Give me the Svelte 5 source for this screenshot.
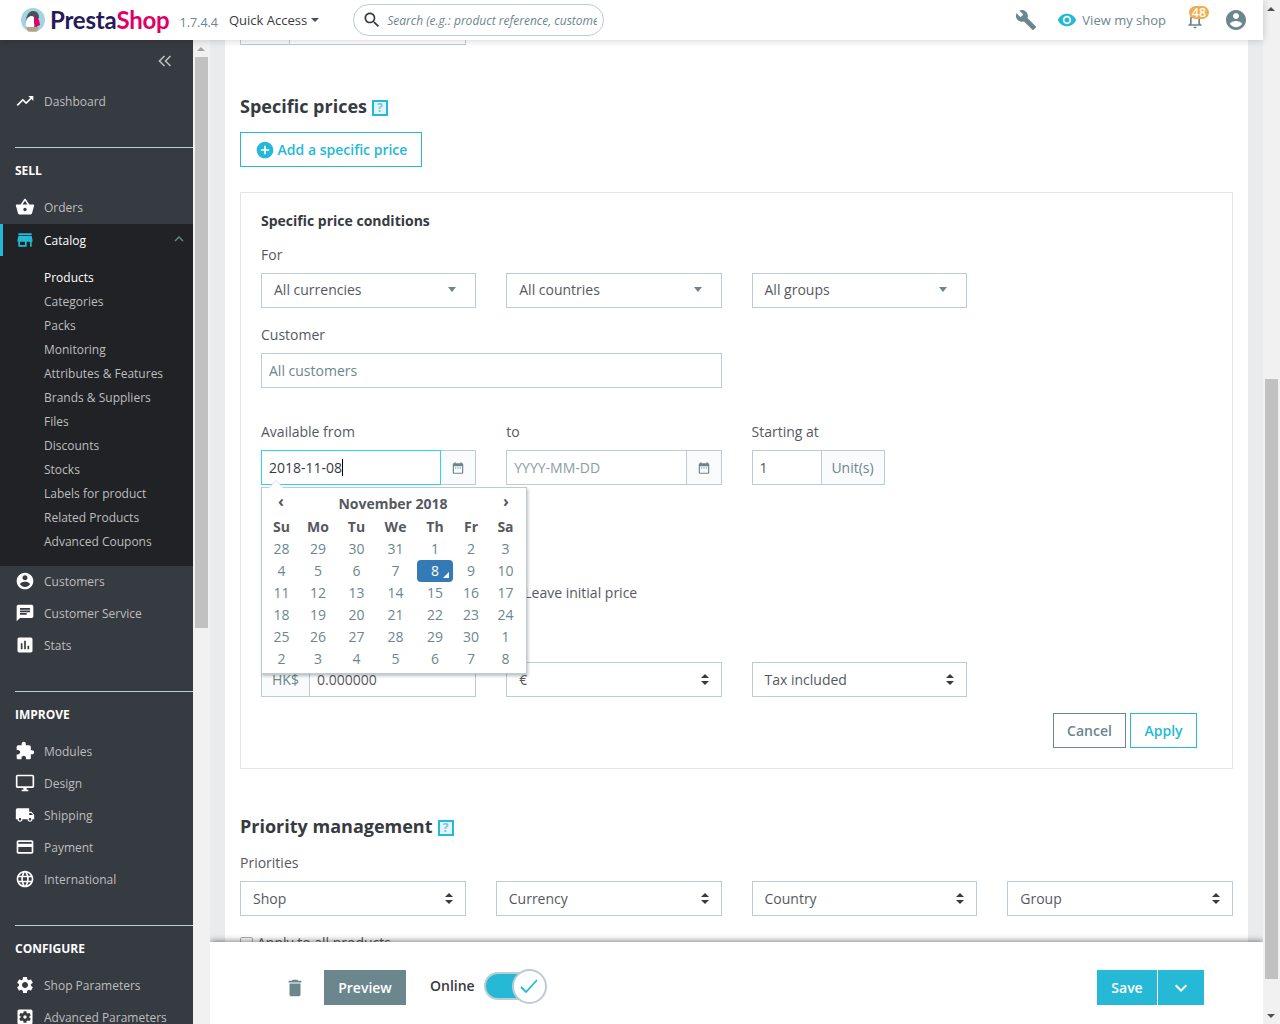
<script>
	const icons = {
		trend: 'M16 6l2.29 2.29-4.88 4.88-4-4L2 16.59 3.41 18l6-6 4 4 6.3-6.29L22 12V6z',
		basket: 'M17.21 9l-4.38-6.56c-.19-.28-.51-.42-.83-.42-.32 0-.64.14-.83.43L6.79 9H2c-.55 0-1 .45-1 1 0 .09.01.18.04.27l2.54 9.27c.23.84 1 1.46 1.92 1.46h13c.92 0 1.69-.62 1.93-1.46l2.54-9.27L23 10c0-.55-.45-1-1-1h-4.79zM9 9l3-4.4L15 9H9zm3 8c-1.1 0-2-.9-2-2s.9-2 2-2 2 .9 2 2-.9 2-2 2z',
		store: 'M20 4H4v2h16V4zm1 10v-2l-1-5H4l-1 5v2h1v6h10v-6h4v6h2v-6h1zm-9 4H6v-4h6v4z',
		account: 'M12 2C6.48 2 2 6.48 2 12s4.48 10 10 10 10-4.48 10-10S17.52 2 12 2zm0 3c1.66 0 3 1.34 3 3s-1.34 3-3 3-3-1.34-3-3 1.34-3 3-3zm0 14.2c-2.5 0-4.71-1.28-6-3.22.03-1.99 4-3.08 6-3.08 1.99 0 5.97 1.09 6 3.08-1.29 1.94-3.5 3.22-6 3.22z',
		chat: 'M20 2H4c-1.1 0-1.99.9-1.99 2L2 22l4-4h14c1.1 0 2-.9 2-2V4c0-1.1-.9-2-2-2zm-6 12H6v-2h8v2zm4-3H6V9h12v2zm0-3H6V6h12v2z',
		stats: 'M19 3H5c-1.1 0-2 .9-2 2v14c0 1.1.9 2 2 2h14c1.1 0 2-.9 2-2V5c0-1.1-.9-2-2-2zM9 17H7v-7h2v7zm4 0h-2V7h2v10zm4 0h-2v-4h2v4z',
		puzzle: 'M20.5 11H19V7c0-1.1-.9-2-2-2h-4V3.5C13 2.12 11.88 1 10.5 1S8 2.12 8 3.5V5H4c-1.1 0-1.99.9-1.99 2v3.8H3.5c1.49 0 2.7 1.21 2.7 2.7s-1.21 2.7-2.7 2.7H2V20c0 1.1.9 2 2 2h3.8v-1.5c0-1.49 1.21-2.7 2.7-2.7 1.49 0 2.7 1.21 2.7 2.7V22H17c1.1 0 2-.9 2-2v-4h1.5c1.38 0 2.5-1.12 2.5-2.5S21.88 11 20.5 11z',
		desktop: 'M21 2H3c-1.1 0-2 .9-2 2v12c0 1.1.9 2 2 2h7v2H8v2h8v-2h-2v-2h7c1.1 0 2-.9 2-2V4c0-1.1-.9-2-2-2zm0 14H3V4h18v12z',
		truck: 'M20 8h-3V4H3c-1.1 0-2 .9-2 2v11h2c0 1.66 1.34 3 3 3s3-1.34 3-3h6c0 1.66 1.34 3 3 3s3-1.34 3-3h2v-5l-3-4zM6 18.5c-.83 0-1.5-.67-1.5-1.5s.67-1.5 1.5-1.5 1.5.67 1.5 1.5-.67 1.5-1.5 1.5zm13.5-9l1.96 2.5H17V9.5h2.5zm-1.5 9c-.83 0-1.5-.67-1.5-1.5s.67-1.5 1.5-1.5 1.5.67 1.5 1.5-.67 1.5-1.5 1.5z',
		card: 'M20 4H4c-1.11 0-1.99.89-1.99 2L2 18c0 1.11.89 2 2 2h16c1.11 0 2-.89 2-2V6c0-1.11-.89-2-2-2zm0 14H4v-6h16v6zm0-10H4V6h16v2z',
		globe: 'M11.99 2C6.47 2 2 6.48 2 12s4.47 10 9.99 10C17.52 22 22 17.52 22 12S17.52 2 11.99 2zm6.93 6h-2.95c-.32-1.25-.78-2.45-1.38-3.56 1.84.63 3.37 1.91 4.33 3.56zM12 4.04c.83 1.2 1.48 2.53 1.91 3.96h-3.82c.43-1.43 1.08-2.76 1.91-3.96zM4.26 14C4.1 13.36 4 12.69 4 12s.1-1.36.26-2h3.38c-.08.66-.14 1.32-.14 2 0 .68.06 1.34.14 2H4.26zm.82 2h2.95c.32 1.25.78 2.45 1.38 3.56-1.84-.63-3.37-1.9-4.33-3.56zm2.95-8H5.08c.96-1.66 2.49-2.93 4.33-3.56C8.81 5.55 8.35 6.75 8.03 8zM12 19.96c-.83-1.2-1.48-2.53-1.91-3.96h3.82c-.43 1.43-1.08 2.76-1.91 3.96zM14.34 14H9.66c-.09-.66-.16-1.32-.16-2 0-.68.07-1.35.16-2h4.68c.09.65.16 1.32.16 2 0 .68-.07 1.34-.16 2zm.25 5.56c.6-1.11 1.06-2.31 1.38-3.56h2.95c-.96 1.65-2.49 2.93-4.33 3.56zM16.36 14c.08-.66.14-1.32.14-2 0-.68-.06-1.34-.14-2h3.38c.16.64.26 1.31.26 2s-.1 1.36-.26 2h-3.38z',
		gear: 'M19.14 12.94c.04-.3.06-.61.06-.94 0-.32-.02-.64-.07-.94l2.03-1.58c.18-.14.23-.41.12-.61l-1.92-3.32c-.12-.22-.37-.29-.59-.22l-2.39.96c-.5-.38-1.03-.7-1.62-.94l-.36-2.54c-.04-.24-.24-.41-.48-.41h-3.84c-.24 0-.43.17-.47.41l-.36 2.54c-.59.24-1.13.57-1.62.94l-2.39-.96c-.22-.08-.47 0-.59.22L2.74 8.87c-.12.21-.08.47.12.61l2.03 1.58c-.05.3-.09.63-.09.94s.02.64.07.94l-2.03 1.58c-.18.14-.23.41-.12.61l1.92 3.32c.12.22.37.29.59.22l2.39-.96c.5.38 1.03.7 1.62.94l.36 2.54c.05.24.24.41.48.41h3.84c.24 0 .44-.17.47-.41l.36-2.54c.59-.24 1.13-.56 1.62-.94l2.39.96c.22.08.47 0 .59-.22l1.92-3.32c.12-.22.07-.47-.12-.61l-2.01-1.58zM12 15.6c-1.98 0-3.6-1.62-3.6-3.6s1.62-3.6 3.6-3.6 3.6 1.62 3.6 3.6-1.62 3.6-3.6 3.6z',
		gearbox: 'M12 10c-1.1 0-2 .9-2 2s.9 2 2 2 2-.9 2-2-.9-2-2-2zm7-7H5c-1.11 0-2 .9-2 2v14c0 1.1.89 2 2 2h14c1.11 0 2-.9 2-2V5c0-1.1-.89-2-2-2zm-1.75 9c0 .23-.02.46-.05.68l1.48 1.16c.13.11.17.3.08.45l-1.4 2.42c-.09.15-.27.21-.43.15l-1.74-.7c-.36.28-.76.51-1.18.69l-.26 1.85c-.03.17-.18.3-.35.3h-2.8c-.17 0-.32-.13-.35-.29l-.26-1.85c-.43-.18-.82-.41-1.18-.69l-1.74.7c-.16.06-.34 0-.43-.15l-1.4-2.42c-.09-.15-.05-.34.08-.45l1.48-1.16c-.03-.23-.05-.46-.05-.69 0-.23.02-.46.05-.68l-1.48-1.16c-.13-.11-.17-.3-.08-.45l1.4-2.42c.09-.15.27-.21.43-.15l1.74.7c.36-.28.76-.51 1.18-.69l.26-1.85c.03-.17.18-.3.35-.3h2.8c.17 0 .32.13.35.29l.26 1.85c.43.18.82.41 1.18.69l1.74-.7c.16-.06.34 0 .43.15l1.4 2.42c.09.15.05.34-.08.45l-1.48 1.16c.03.23.05.46.05.69z',
		wrench: 'M22.7 19l-9.1-9.1c.9-2.3.4-5-1.5-6.9-2-2-5-2.4-7.4-1.3L9 6 6 9 1.6 4.7C.4 7.1.9 10.1 2.9 12.1c1.9 1.9 4.6 2.4 6.9 1.5l9.1 9.1c.4.4 1 .4 1.4 0l2.3-2.3c.5-.4.5-1.1.1-1.4z',
		eye: 'M12 4.5C7 4.5 2.73 7.61 1 12c1.73 4.39 6 7.5 11 7.5s9.27-3.11 11-7.5c-1.73-4.39-6-7.5-11-7.5zM12 17c-2.76 0-5-2.24-5-5s2.24-5 5-5 5 2.24 5 5-2.24 5-5 5zm0-8c-1.66 0-3 1.34-3 3s1.34 3 3 3 3-1.34 3-3-1.34-3-3-3z',
		bell: 'M12 22c1.1 0 2-.9 2-2h-4c0 1.1.9 2 2 2zm6-6v-5c0-3.07-1.63-5.64-4.5-6.32V4c0-.83-.67-1.5-1.5-1.5s-1.5.67-1.5 1.5v.68C7.64 5.36 6 7.92 6 11v5l-2 2v1h16v-1l-2-2zm-2 1H8v-6c0-2.48 1.51-4.5 4-4.5s4 2.02 4 4.5v6z',
		trash: 'M6 19c0 1.1.9 2 2 2h8c1.1 0 2-.9 2-2V7H6v12zM19 4h-3.5l-1-1h-5l-1 1H5v2h14V4z',
		search: 'M15.5 14h-.79l-.28-.27C15.41 12.59 16 11.11 16 9.5 16 5.91 13.09 3 9.5 3S3 5.91 3 9.5 5.91 16 9.5 16c1.61 0 3.09-.59 4.23-1.57l.27.28v.79l5 4.99L20.49 19l-4.99-5zm-6 0C7.01 14 5 11.99 5 9.5S7.01 5 9.5 5 14 7.01 14 9.5 11.99 14 9.5 14z',
		plus: 'M12 2C6.48 2 2 6.48 2 12s4.48 10 10 10 10-4.48 10-10S17.52 2 12 2zm5 11h-4v4h-2v-4H7v-2h4V7h2v4h4v2z',
		date: 'M9 11H7v2h2v-2zm4 0h-2v2h2v-2zm4 0h-2v2h2v-2zm2-7h-1V2h-2v2H8V2H6v2H5c-1.11 0-1.99.9-1.99 2L3 20c0 1.1.89 2 2 2h14c1.1 0 2-.9 2-2V6c0-1.1-.9-2-2-2zm0 16H5V9h14v11z',
		up: 'M7.41 15.41L12 10.83l4.59 4.58L18 14l-6-6-6 6z',
		down: 'M7.41 8.59L12 13.17l4.59-4.58L18 10l-6 6-6-6z'
	};

	const subItems = ['Categories', 'Packs', 'Monitoring', 'Attributes & Features', 'Brands & Suppliers', 'Files', 'Discounts', 'Stocks', 'Labels for product', 'Related Products', 'Advanced Coupons'];
	const weekdays = ['Su', 'Mo', 'Tu', 'We', 'Th', 'Fr', 'Sa'];
	const weeks = [
		[28, 29, 30, 31, 1, 2, 3],
		[4, 5, 6, 7, 8, 9, 10],
		[11, 12, 13, 14, 15, 16, 17],
		[18, 19, 20, 21, 22, 23, 24],
		[25, 26, 27, 28, 29, 30, 1],
		[2, 3, 4, 5, 6, 7, 8]
	];
</script>

{#snippet icon(name, size = 24)}
	<svg class="icon" width={size} height={size} viewBox="0 0 24 24" aria-hidden="true"><path d={icons[name]} /></svg>
{/snippet}

{#snippet navItem(name, label)}
	<a class="nav-item">{@render icon(name, 20)}<span>{label}</span></a>
{/snippet}

{#snippet updown()}
	<span class="updown"></span>
{/snippet}

<div class="page">
	<div class="window">
		<header class="topbar">
			<div class="logo">
				<svg width="26" height="26" viewBox="0 0 26 26" aria-hidden="true">
					<circle cx="13" cy="13" r="12" fill="#a3d4e2" />
					<path d="M6 18c-1-7 2-14 7-14 4 0 6 3 6 6l-3 10H8z" fill="#4a5058" />
					<path d="M6 19c-1-5 1-9 5-10 3 0 4 2 4 4l-1 8H8z" fill="#fff" />
					<path d="M14 9l5 4 1 5-4 2-2-4z" fill="#df0067" />
					<path d="M6 20h13l-2 4.500H8z" fill="#b6a285" />
				</svg>
				<span class="wordmark"><span class="presta">Presta</span><span class="shop">Shop</span></span>
			</div>
			<span class="version">1.7.4.4</span>
			<span class="quick">Quick Access<i class="caret dark"></i></span>
			<div class="search">
				{@render icon('search', 20)}
				<span class="search-text">Search (e.g.: product reference, customer name...)</span>
			</div>
			<div class="top-right">
				<span class="tool">{@render icon('wrench', 22)}</span>
				<span class="shop-link">{@render icon('eye', 20)}View my shop</span>
				<span class="bell">{@render icon('bell', 20)}<b class="badge">48</b></span>
				<span class="avatar">{@render icon('account', 24)}</span>
			</div>
		</header>

		<div class="below">
			<aside class="sidebar">
				<div class="collapse">
					<svg width="14" height="12" viewBox="0 0 14 12" aria-hidden="true"><path d="M6.5 1L1.5 6l5 5M12.500 1l-5 5 5 5" /></svg>
				</div>
				{@render navItem('trend', 'Dashboard')}
				<div class="section">SELL</div>
				{@render navItem('basket', 'Orders')}
				<div class="catalog">
					<a class="nav-item active">
						{@render icon('store', 20)}<span>Catalog</span>
						<svg class="chev" width="18" height="18" viewBox="0 0 24 24" aria-hidden="true"><path d={icons.up} /></svg>
					</a>
					<ul class="sub">
						<li class="current">Products</li>
						{#each subItems as item}
							<li>{item}</li>
						{/each}
					</ul>
				</div>
				{@render navItem('account', 'Customers')}
				{@render navItem('chat', 'Customer Service')}
				{@render navItem('stats', 'Stats')}
				<div class="section">IMPROVE</div>
				{@render navItem('puzzle', 'Modules')}
				{@render navItem('desktop', 'Design')}
				{@render navItem('truck', 'Shipping')}
				{@render navItem('card', 'Payment')}
				{@render navItem('globe', 'International')}
				<div class="section">CONFIGURE</div>
				{@render navItem('gear', 'Shop Parameters')}
				{@render navItem('gearbox', 'Advanced Parameters')}
			</aside>

			<div class="side-scroll">
				<i class="arrow up"></i>
				<div class="thumb"></div>
			</div>

			<main class="content">
				<div class="sheet">
					<div class="stub"><span></span></div>

					<h2>Specific prices <span class="help">?</span></h2>
					<button class="btn-add">{@render icon('plus', 20)}Add a specific price</button>

					<section class="card">
						<h4>Specific price conditions</h4>
						<div class="cols for-row">
							<div>
								<label>For</label>
								<div class="field select">All currencies<i class="caret"></i></div>
							</div>
							<div>
								<label>&nbsp;</label>
								<div class="field select">All countries<i class="caret"></i></div>
							</div>
							<div>
								<label>&nbsp;</label>
								<div class="field select">All groups<i class="caret"></i></div>
							</div>
						</div>
						<div class="cols customer-row">
							<div class="span2">
								<label>Customer</label>
								<div class="field customer">All customers</div>
							</div>
						</div>
						<div class="cols date-row">
							<div class="date-col">
								<label>Available from</label>
								<div class="group">
									<div class="field grow focused">2018-11-08<span class="cursor"></span></div>
									<span class="addon">{@render icon('date', 14)}</span>
								</div>
								<div class="picker">
									<div class="picker-head">
										<span class="nav">‹</span>
										<span class="month">November 2018</span>
										<span class="nav">›</span>
									</div>
									<div class="days">
										{#each weekdays as d}
											<span class="dow">{d}</span>
										{/each}
										{#each weeks as week}
											{#each week as day, i}
												<span class="day" class:today={day === 8 && i === 4}>{day}</span>
											{/each}
										{/each}
									</div>
								</div>
							</div>
							<div>
								<label>to</label>
								<div class="group">
									<div class="field grow placeholder">YYYY-MM-DD</div>
									<span class="addon">{@render icon('date', 14)}</span>
								</div>
							</div>
							<div>
								<label>Starting at</label>
								<div class="group starting">
									<div class="field grow">1</div>
									<span class="addon unit">Unit(s)</span>
								</div>
							</div>
						</div>
						<div class="cols leave-row">
							<div></div>
							<div class="leave"><span class="box"></span>Leave initial price</div>
						</div>
						<div class="cols price-row">
							<div>
								<div class="group">
									<span class="addon hk">HK$</span>
									<div class="field grow">0.000000</div>
								</div>
							</div>
							<div>
								<div class="field select">€{@render updown()}</div>
							</div>
							<div>
								<div class="field select">Tax included{@render updown()}</div>
							</div>
						</div>
						<div class="actions">
							<button class="btn-cancel">Cancel</button>
							<button class="btn-apply">Apply</button>
						</div>
					</section>

					<h2 class="priority">Priority management <span class="help">?</span></h2>
					<label class="prio-label">Priorities</label>
					<div class="cols">
						<div class="field select">Shop{@render updown()}</div>
						<div class="field select">Currency{@render updown()}</div>
						<div class="field select">Country{@render updown()}</div>
						<div class="field select">Group{@render updown()}</div>
					</div>
					<div class="apply-all"><span class="box"></span>Apply to all products</div>
				</div>

				<footer class="actionbar">
					<span class="trash">{@render icon('trash', 22)}</span>
					<button class="btn-preview">Preview</button>
					<span class="online">Online</span>
					<span class="toggle">
						<span class="knob">
							<svg width="20" height="16" viewBox="0 0 20 16" aria-hidden="true"><path d="M2 9l5 5L18 2" /></svg>
						</span>
					</span>
					<div class="save-group">
						<button class="btn-save">Save</button>
						<button class="btn-more">{@render icon('down', 24)}</button>
					</div>
				</footer>
			</main>
		</div>
	</div>

	<div class="page-scroll">
		<i class="arrow up"></i>
		<div class="page-thumb"></div>
		<i class="arrow dn"></i>
	</div>
</div>

<style>
	:global(body) {
		margin: 0;
		background: #eaebec;
	}
	.page {
		display: flex;
		width: 1280px;
		height: 1024px;
		overflow: hidden;
		font-family: 'Open Sans', 'Liberation Sans', sans-serif;
		font-size: 14px;
		color: #363a41;
	}
	.window {
		width: 1263px;
		display: flex;
		flex-direction: column;
		height: 100%;
	}
	.icon {
		display: block;
		fill: currentColor;
		flex: none;
	}

	/* top bar */
	.topbar {
		height: 40px;
		flex: none;
		display: flex;
		align-items: center;
		background: #fff;
		box-shadow: 0 0 8px rgba(0, 0, 0, 0.2);
		position: relative;
		z-index: 3;
	}
	.logo {
		display: flex;
		align-items: center;
		margin-left: 20px;
		gap: 4px;
	}
	.wordmark {
		font-family: 'Lato', 'Open Sans', sans-serif;
		font-size: 24px;
		font-weight: 700;
		letter-spacing: -0.2px;
		line-height: 40px;
	}
	.presta {
		color: #251b5b;
	}
	.shop {
		color: #df0067;
	}
	.version {
		margin-left: 10px;
		margin-top: 5px;
		font-size: 12.5px;
		color: #6c868e;
	}
	.quick {
		margin-left: 11px;
		font-size: 13px;
		color: #363a41;
		display: flex;
		align-items: center;
	}
	.caret {
		width: 0;
		height: 0;
		border-left: 4.5px solid transparent;
		border-right: 4.5px solid transparent;
		border-top: 5px solid #6c868e;
		margin-left: auto;
	}
	.caret.dark {
		margin-left: 4px;
		border-top-color: #4a5056;
		border-left-width: 4px;
		border-right-width: 4px;
		border-top-width: 4px;
	}
	.search {
		margin-left: 34px;
		width: 251px;
		height: 32px;
		box-sizing: border-box;
		border: 1px solid #bbcdd2;
		border-radius: 16px;
		display: flex;
		align-items: center;
		padding: 0 6px 0 8px;
		gap: 5px;
		color: #363a41;
		overflow: hidden;
	}
	.search-text {
		font-size: 12px;
		font-style: italic;
		color: #6c868e;
		white-space: nowrap;
		overflow: hidden;
	}
	.top-right {
		margin-left: auto;
		display: flex;
		align-items: center;
		height: 40px;
		padding-right: 15px;
	}
	.tool {
		color: #6c868e;
	}
	.shop-link {
		display: flex;
		align-items: center;
		gap: 5px;
		margin-left: 20px;
		font-size: 13px;
		color: #6c868e;
	}
	.shop-link .icon {
		color: #25b9d7;
	}
	.bell {
		position: relative;
		margin-left: 19px;
		color: #6c868e;
	}
	.badge {
		position: absolute;
		top: -4px;
		left: 4px;
		width: 20px;
		height: 13px;
		border-radius: 7px;
		background: #f0ad4e;
		color: #fff;
		font-size: 12.5px;
		font-weight: 600;
		line-height: 13px;
		text-align: center;
	}
	.avatar {
		margin-left: 19px;
		color: #6c868e;
	}

	.below {
		flex: 1;
		display: flex;
		min-height: 0;
	}

	/* sidebar */
	.sidebar {
		width: 193px;
		flex: none;
		background: #363a41;
		color: #bebebe;
		overflow: hidden;
		font-size: 12px;
	}
	.collapse {
		height: 45px;
		display: flex;
		align-items: center;
		justify-content: flex-end;
		padding: 0 21px 3px 0;
		box-sizing: border-box;
	}
	.collapse svg {
		fill: none;
		stroke: #bebebe;
		stroke-width: 1.6;
	}
	.nav-item {
		display: flex;
		align-items: center;
		height: 32px;
		padding-left: 15px;
		gap: 9px;
	}
	.nav-item .icon {
		color: #fff;
	}
	.section {
		margin: 30px 0 12px 15px;
		padding-top: 14px;
		border-top: 1px solid #bbcdd2;
		color: #fff;
		font-weight: 700;
		line-height: 17px;
	}
	.catalog {
		background: #202226;
		height: 342px;
		margin: 1px 0 -1px;
	}
	.nav-item.active {
		color: #fff;
		border-left: 3px solid #25b9d7;
		padding-left: 12px;
		position: relative;
	}
	.nav-item.active .icon {
		color: #25b9d7;
	}
	.chev {
		position: absolute;
		right: 5px;
		top: 6px;
		fill: #6c868e;
	}
	.sub {
		list-style: none;
		margin: 10px 0 0;
		padding: 0 0 0 44px;
	}
	.sub li {
		height: 24px;
		line-height: 24px;
	}
	.sub li.current {
		color: #fff;
	}

	/* inner scrollbar */
	.side-scroll {
		width: 17px;
		flex: none;
		background: #f1f1f1;
		position: relative;
		padding-top: 17px;
		box-sizing: border-box;
	}
	.thumb {
		margin: 0 2px;
		height: 571px;
		background: #c1c1c1;
	}
	.arrow {
		position: absolute;
		left: 4px;
		width: 0;
		height: 0;
		border-left: 4px solid transparent;
		border-right: 4px solid transparent;
	}
	.arrow.up {
		top: 7px;
		border-bottom: 4px solid #a3a3a3;
	}
	.arrow.dn {
		bottom: 6px;
		border-top: 4px solid #505050;
	}

	/* content */
	.content {
		flex: 1;
		position: relative;
		overflow: hidden;
		background: #eaebec;
		padding: 0 15px;
		min-width: 0;
	}
	.sheet {
		background: #fff;
		height: 100%;
		padding: 0 15px;
		box-sizing: border-box;
		overflow: hidden;
	}
	.stub {
		width: 226px;
		height: 5px;
		box-sizing: border-box;
		border: 1px solid #bbcdd2;
		border-top: 0;
	}
	.stub span {
		display: block;
		width: 48px;
		height: 100%;
		border-right: 1px solid #bbcdd2;
		background: #fafbfc;
	}
	h2 {
		margin: 48px 0 0;
		font-size: 18px;
		font-weight: 700;
		line-height: 26px;
		color: #363a41;
		display: flex;
		align-items: center;
		gap: 5px;
	}
	.help {
		width: 16px;
		height: 16px;
		box-sizing: border-box;
		border: 2px solid #25b9d7;
		background: #e4f5f9;
		color: #6fcbde;
		font-size: 12px;
		font-weight: 700;
		line-height: 12px;
		text-align: center;
		margin-top: 3px;
	}
	button {
		font-family: inherit;
		cursor: pointer;
		background: none;
		border-radius: 0;
	}
	.btn-add {
		margin-top: 13px;
		height: 35px;
		width: 182px;
		border: 1px solid #25b9d7;
		color: #25b9d7;
		font-size: 14px;
		font-weight: 600;
		display: flex;
		align-items: center;
		justify-content: center;
		gap: 3px;
		padding: 0;
	}
	.card {
		margin-top: 25px;
		height: 577px;
		box-sizing: border-box;
		border: 1px solid #e3e4e5;
		padding: 17px 20px 0;
	}
	h4 {
		margin: 0;
		font-size: 14px;
		font-weight: 700;
		line-height: 22px;
		color: #363a41;
	}
	label {
		display: block;
		font-size: 14px;
		line-height: 20px;
		color: #55595f;
		margin-bottom: 8px;
	}
	.cols {
		display: grid;
		grid-template-columns: repeat(4, 1fr);
		column-gap: 30px;
	}
	.span2 {
		grid-column: span 2;
	}
	.field {
		height: 35px;
		box-sizing: border-box;
		border: 1px solid #bbcdd2;
		display: flex;
		align-items: center;
		padding: 0 12px;
		font-size: 14px;
		color: #55595f;
		background: #fff;
	}
	.select {
		position: relative;
	}
	.field.select .caret {
		margin-right: 7px;
	}
	.updown {
		margin-left: auto;
		width: 8px;
		height: 11px;
		position: relative;
		flex: none;
	}
	.updown::before,
	.updown::after {
		content: '';
		position: absolute;
		left: 0;
		border-left: 4px solid transparent;
		border-right: 4px solid transparent;
	}
	.updown::before {
		top: 0;
		border-bottom: 4px solid #363a41;
	}
	.updown::after {
		bottom: 0;
		border-top: 4px solid #363a41;
	}
	.for-row {
		margin-top: 13px;
	}
	.for-row .field {
		padding-bottom: 2px;
	}
	.customer-row {
		margin-top: 17px;
	}
	.customer {
		padding: 0 7px;
		color: #6c868e;
	}
	.date-row {
		margin-top: 34px;
	}
	.date-col {
		position: relative;
	}
	.group {
		display: flex;
	}
	.grow {
		flex: 1;
		min-width: 0;
		padding: 0 7px;
	}
	.starting {
		width: 133px;
	}
	.addon {
		flex: none;
		height: 35px;
		box-sizing: border-box;
		width: 35px;
		border: 1px solid #bbcdd2;
		border-left: 0;
		background: #fafbfc;
		color: #6c868e;
		display: flex;
		align-items: center;
		justify-content: center;
	}
	.addon.unit {
		width: 63px;
		font-size: 14px;
	}
	.addon.hk {
		width: 48px;
		border-left: 1px solid #bbcdd2;
		border-right: 0;
		font-size: 14px;
	}
	.focused {
		border-color: #2ad4f4;
		color: #363a41;
	}
	.cursor {
		display: inline-block;
		width: 1px;
		height: 17px;
		background: #000;
	}
	.placeholder {
		color: #8a9da3;
	}

	/* date picker */
	.picker {
		position: absolute;
		left: 0;
		top: 65px;
		width: 266px;
		height: 187px;
		box-sizing: border-box;
		z-index: 2;
		background: #fff;
		border: 1px solid #bbcdd2;
		box-shadow: 1px 2px 3px rgba(0, 0, 0, 0.25);
		color: #55595f;
		padding: 0 4px;
	}
	.picker::before {
		content: '';
		position: absolute;
		left: 7px;
		top: -7px;
		border-left: 7px solid transparent;
		border-right: 7px solid transparent;
		border-bottom: 7px solid #fff;
		filter: drop-shadow(0 -1px 0 #d5dfe2);
	}
	.picker-head {
		height: 28px;
		display: grid;
		grid-template-columns: 30px 1fr 32px;
		align-items: center;
		text-align: center;
		font-weight: 700;
	}
	.nav {
		font-size: 16px;
		line-height: 22px;
		height: 24px;
	}
	.month {
		font-size: 14px;
		font-weight: 700;
		color: #55595f;
		padding-top: 2px;
	}
	.days {
		display: grid;
		grid-template-columns: 31px 42px 35px 43px 36px 36px 33px;
		grid-auto-rows: 22px;
		text-align: center;
		line-height: 22px;
	}
	.dow {
		font-weight: 700;
	}
	.day {
		color: #6c868e;
	}
	.today {
		position: relative;
		background: #337ab7;
		color: #fff;
		border-radius: 4px;
	}
	.today::after {
		content: '';
		position: absolute;
		right: 4px;
		bottom: 4px;
		border-left: 6px solid transparent;
		border-bottom: 6px solid #fff;
	}

	.leave-row {
		margin-top: 98px;
	}
	.leave {
		display: flex;
		align-items: center;
		gap: 5px;
		line-height: 20px;
		color: #55595f;
		white-space: nowrap;
	}
	.box {
		width: 13px;
		height: 13px;
		box-sizing: border-box;
		border: 1px solid #b0b0b0;
		border-radius: 2px;
		background: #fff;
		flex: none;
	}
	.price-row {
		margin-top: 59px;
	}
	.actions {
		margin-top: 16px;
		display: flex;
		justify-content: flex-end;
		gap: 4px;
		padding-right: 15px;
	}
	.btn-cancel,
	.btn-apply {
		height: 35px;
		font-size: 14px;
		font-weight: 600;
		padding: 0;
	}
	.btn-cancel {
		width: 73px;
		border: 1px solid #6c868e;
		color: #6c868e;
	}
	.btn-apply {
		width: 67px;
		border: 1px solid #25b9d7;
		color: #25b9d7;
	}
	h2.priority {
		margin-top: 44px;
	}
	.prio-label {
		margin: 14px 0 8px;
	}
	.apply-all {
		margin-top: 17px;
		display: flex;
		align-items: center;
		gap: 4px;
		line-height: 20px;
		color: #55595f;
	}

	/* bottom action bar */
	.actionbar {
		position: absolute;
		left: 0;
		right: 0;
		bottom: 0;
		height: 82px;
		background: #fff;
		box-shadow: 0 -1px 6px rgba(0, 0, 0, 0.5);
		display: flex;
		align-items: center;
		padding: 9px 59px 0 74px;
		box-sizing: border-box;
		z-index: 3;
	}
	.trash {
		color: #6c868e;
	}
	.btn-preview {
		margin-left: 18px;
		width: 82px;
		height: 35px;
		background: #6c868e;
		border: 0;
		color: #fff;
		font-size: 14px;
		font-weight: 600;
	}
	.online {
		margin-left: 24px;
		margin-top: -4px;
		font-weight: 600;
		color: #363a41;
	}
	.toggle {
		margin-left: 9px;
		margin-top: -4px;
		width: 62px;
		height: 28px;
		box-sizing: border-box;
		border: 2px solid #bbcdd2;
		border-radius: 14px;
		background: #25b9d7;
		position: relative;
	}
	.knob {
		position: absolute;
		right: -3px;
		top: -5px;
		width: 35px;
		height: 35px;
		box-sizing: border-box;
		border: 2px solid #bbcdd2;
		border-radius: 50%;
		background: #fff;
		display: flex;
		align-items: center;
		justify-content: center;
	}
	.knob svg {
		fill: none;
		stroke: #25b9d7;
		stroke-width: 1.8;
	}
	.save-group {
		margin-left: auto;
		display: flex;
		gap: 1px;
	}
	.btn-save,
	.btn-more {
		height: 35px;
		border: 0;
		background: #25b9d7;
		color: #fff;
		font-size: 14px;
		font-weight: 600;
		padding: 0;
	}
	.btn-save {
		width: 60px;
	}
	.btn-more {
		width: 46px;
		display: flex;
		align-items: center;
		justify-content: center;
	}

	/* page scrollbar */
	.page-scroll {
		width: 17px;
		flex: none;
		background: #f1f1f1;
		position: relative;
		padding-top: 379px;
		box-sizing: border-box;
	}
	.page-scroll .arrow.up {
		border-bottom-color: #505050;
	}
	.page-thumb {
		margin: 0 2px;
		height: 600px;
		background: #c1c1c1;
	}
</style>
